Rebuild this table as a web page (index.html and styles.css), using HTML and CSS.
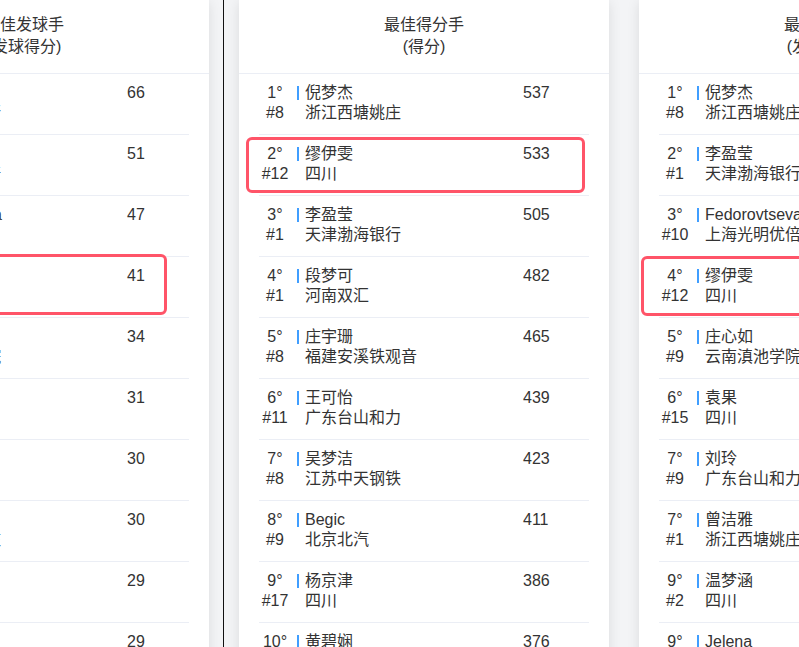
FILE: index.html
```html
<!DOCTYPE html>
<html lang="zh-CN">
<head>
<meta charset="utf-8">
<title>最佳球员</title>
<link rel="stylesheet" href="styles.css">
</head>
<body>
<div class="board">
  <section class="card card--serve">
    <header class="card-head"><div>最佳发球手</div><div>(发球得分)</div></header>
    <ul class="rank-list">
      <li class="row"><div class="pos"><span>1°</span><span>#6</span></div><div class="who"><span class="name">王媛媛</span><span class="team">天津渤海银行</span></div><div class="score">66</div></li>
      <li class="row"><div class="pos"><span>2°</span><span>#3</span></div><div class="who"><span class="name">陈博雅</span><span class="team">上海光明优倍</span></div><div class="score">51</div></li>
      <li class="row"><div class="pos"><span>3°</span><span>#10</span></div><div class="who"><span class="name">Fedorovtseva</span><span class="team">上海</span></div><div class="score">47</div></li>
      <li class="row row--mark mark-left"><div class="pos"><span>4°</span><span>#12</span></div><div class="who"><span class="name">缪伊雯</span><span class="team">四川</span></div><div class="score">41</div></li>
      <li class="row"><div class="pos"><span>5°</span><span>#9</span></div><div class="who"><span class="name">庄心如</span><span class="team">云南滇池学院</span></div><div class="score">34</div></li>
      <li class="row"><div class="pos"><span>6°</span><span>#15</span></div><div class="who"><span class="name">袁果</span><span class="team">四川</span></div><div class="score">31</div></li>
      <li class="row"><div class="pos"><span>7°</span><span>#2</span></div><div class="who"><span class="name">温梦涵</span><span class="team">四川</span></div><div class="score">30</div></li>
      <li class="row"><div class="pos"><span>7°</span><span>#1</span></div><div class="who"><span class="name">曾洁雅</span><span class="team">浙江西塘姚庄</span></div><div class="score">30</div></li>
      <li class="row"><div class="pos"><span>9°</span><span>#9</span></div><div class="who"><span class="name">刘玲</span><span class="team">广东</span></div><div class="score">29</div></li>
      <li class="row"><div class="pos"><span>9°</span><span>#8</span></div><div class="who"><span class="name">吴梦洁</span><span class="team">江苏</span></div><div class="score">29</div></li>
    </ul>
  </section>

  <div class="rule"></div>

  <section class="card">
    <header class="card-head"><div>最佳得分手</div><div>(得分)</div></header>
    <ul class="rank-list">
      <li class="row"><div class="pos"><span>1°</span><span>#8</span></div><div class="who"><span class="name">倪梦杰</span><span class="team">浙江西塘姚庄</span></div><div class="score">537</div></li>
      <li class="row row--mark mark-mid"><div class="pos"><span>2°</span><span>#12</span></div><div class="who"><span class="name">缪伊雯</span><span class="team">四川</span></div><div class="score">533</div></li>
      <li class="row"><div class="pos"><span>3°</span><span>#1</span></div><div class="who"><span class="name">李盈莹</span><span class="team">天津渤海银行</span></div><div class="score">505</div></li>
      <li class="row"><div class="pos"><span>4°</span><span>#1</span></div><div class="who"><span class="name">段梦可</span><span class="team">河南双汇</span></div><div class="score">482</div></li>
      <li class="row"><div class="pos"><span>5°</span><span>#8</span></div><div class="who"><span class="name">庄宇珊</span><span class="team">福建安溪铁观音</span></div><div class="score">465</div></li>
      <li class="row"><div class="pos"><span>6°</span><span>#11</span></div><div class="who"><span class="name">王可怡</span><span class="team">广东台山和力</span></div><div class="score">439</div></li>
      <li class="row"><div class="pos"><span>7°</span><span>#8</span></div><div class="who"><span class="name">吴梦洁</span><span class="team">江苏中天钢铁</span></div><div class="score">423</div></li>
      <li class="row"><div class="pos"><span>8°</span><span>#9</span></div><div class="who"><span class="name">Begic</span><span class="team">北京北汽</span></div><div class="score">411</div></li>
      <li class="row"><div class="pos"><span>9°</span><span>#17</span></div><div class="who"><span class="name">杨京津</span><span class="team">四川</span></div><div class="score">386</div></li>
      <li class="row"><div class="pos"><span>10°</span><span>#7</span></div><div class="who"><span class="name">黄碧娴</span><span class="team">广东台山和力</span></div><div class="score">376</div></li>
    </ul>
  </section>

  <section class="card">
    <header class="card-head"><div>最佳扣球手</div><div>(发球得分)</div></header>
    <ul class="rank-list">
      <li class="row"><div class="pos"><span>1°</span><span>#8</span></div><div class="who"><span class="name">倪梦杰</span><span class="team">浙江西塘姚庄</span></div><div class="score">88</div></li>
      <li class="row"><div class="pos"><span>2°</span><span>#1</span></div><div class="who"><span class="name">李盈莹</span><span class="team">天津渤海银行</span></div><div class="score">80</div></li>
      <li class="row"><div class="pos"><span>3°</span><span>#10</span></div><div class="who"><span class="name">Fedorovtseva</span><span class="team">上海光明优倍</span></div><div class="score">75</div></li>
      <li class="row row--mark mark-right"><div class="pos"><span>4°</span><span>#12</span></div><div class="who"><span class="name">缪伊雯</span><span class="team">四川</span></div><div class="score">70</div></li>
      <li class="row"><div class="pos"><span>5°</span><span>#9</span></div><div class="who"><span class="name">庄心如</span><span class="team">云南滇池学院</span></div><div class="score">66</div></li>
      <li class="row"><div class="pos"><span>6°</span><span>#15</span></div><div class="who"><span class="name">袁果</span><span class="team">四川</span></div><div class="score">61</div></li>
      <li class="row"><div class="pos"><span>7°</span><span>#9</span></div><div class="who"><span class="name">刘玲</span><span class="team">广东台山和力</span></div><div class="score">58</div></li>
      <li class="row"><div class="pos"><span>7°</span><span>#1</span></div><div class="who"><span class="name">曾洁雅</span><span class="team">浙江西塘姚庄</span></div><div class="score">58</div></li>
      <li class="row"><div class="pos"><span>9°</span><span>#2</span></div><div class="who"><span class="name">温梦涵</span><span class="team">四川</span></div><div class="score">55</div></li>
      <li class="row"><div class="pos"><span>9°</span><span>#5</span></div><div class="who"><span class="name">Jelena</span><span class="team">北京北汽</span></div><div class="score">55</div></li>
    </ul>
  </section>
</div>
</body>
</html>
```

FILE: styles.css
```css
html, body {
  margin: 0;
  padding: 0;
  height: 100%;
  overflow: hidden;
  background: #f3f4f6;
}

body {
  font-family: "Liberation Sans", "Noto Sans CJK SC", sans-serif;
  font-size: 16px;
  color: #333333;
}

.board {
  display: flex;
  align-items: flex-start;
  width: max-content;
  min-height: 100vh;
  margin-left: -161px;
}

.card {
  flex: none;
  width: 370px;
  background: #ffffff;
  box-shadow: 0 2px 12px rgba(0, 0, 0, 0.1);
}

.card + .card {
  margin-left: 30px;
}

.rule {
  flex: none;
  align-self: stretch;
  width: 1px;
  background: #111111;
  margin: 0 15px 0 14px;
}

.card-head {
  padding: 14px 0 15px;
  line-height: 22px;
  text-align: center;
  border-bottom: 1px solid #ebeef5;
}

.rank-list {
  list-style: none;
  margin: 0 20px;
  padding: 0;
}

.row {
  position: relative;
  display: grid;
  grid-template-columns: 32px 232px 1fr;
  padding: 9px 0 11px;
  line-height: 20px;
  border-bottom: 1px solid #ebeef5;
}

.card--serve .row {
  grid-template-columns: 32px 236px 1fr;
}

.pos {
  display: flex;
  flex-direction: column;
  align-items: center;
  white-space: nowrap;
}

.who {
  display: flex;
  flex-direction: column;
  padding-left: 5px;
  white-space: nowrap;
}

.name::before {
  content: "";
  display: inline-block;
  width: 2px;
  height: 14px;
  margin: 0 6px 0 1px;
  vertical-align: -2px;
  background: #409eff;
}

.team {
  padding-left: 9px;
}

.score {
  white-space: nowrap;
}

.row--mark::after {
  content: "";
  position: absolute;
  border: 3px solid #ff5468;
  border-radius: 6px;
  pointer-events: none;
}

.mark-mid::after {
  top: 2px;
  bottom: 2px;
  left: -13px;
  right: 4px;
}

.mark-right::after {
  top: -1px;
  bottom: 1px;
  left: -18px;
  right: 4px;
}

.mark-left::after {
  top: -3px;
  bottom: 2px;
  left: -13px;
  right: 22px;
}
```
